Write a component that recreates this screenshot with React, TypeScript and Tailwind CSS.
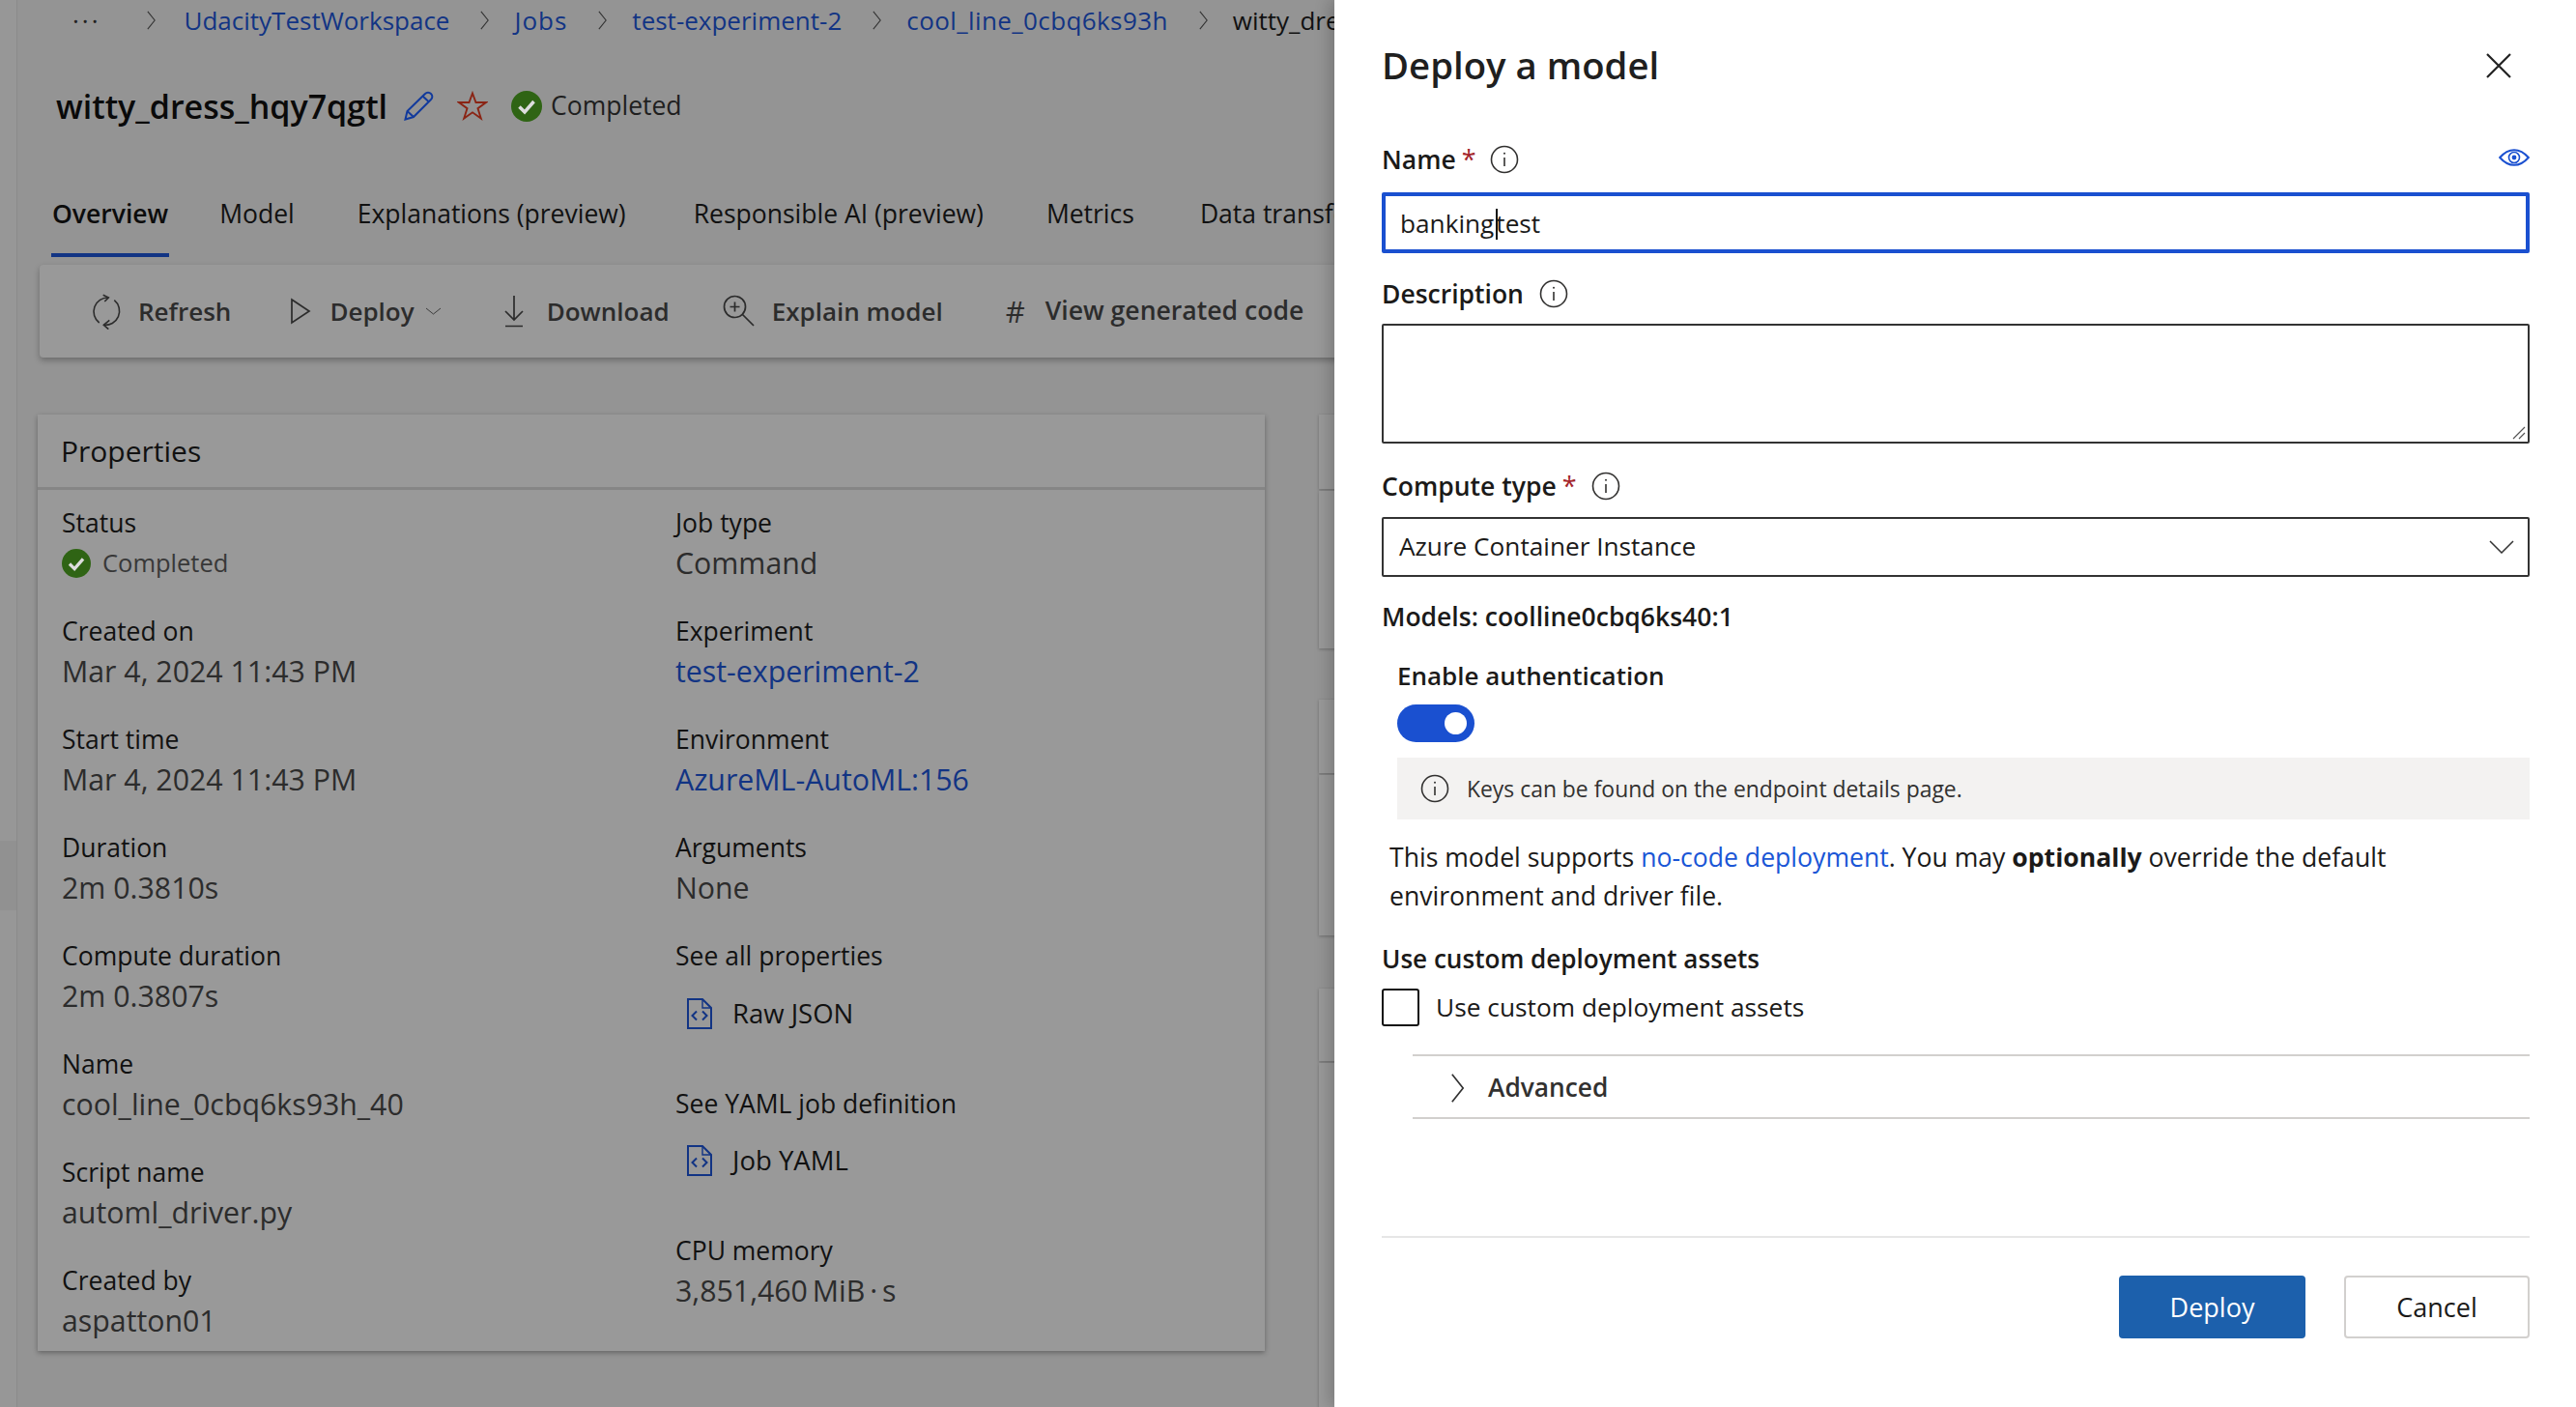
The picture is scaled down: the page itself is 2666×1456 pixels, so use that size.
import type { ReactNode } from "react";

const font = { fontFamily: '"Open Sans", "Liberation Sans", sans-serif' };

function Chevron({ className = "" }: { className?: string }) {
  return (
    <svg viewBox="0 0 12 24" className={`shrink-0 ${className}`} fill="none" stroke="currentColor" strokeWidth="1.2">
      <path d="M2 2l8 10-8 10" />
    </svg>
  );
}

function CheckCircle({ size }: { size: string }) {
  return (
    <svg viewBox="0 0 32 32" className={size}>
      <circle cx="16" cy="16" r="16" fill="#2f6414" />
      <path d="M8.500 16.500l5.500 5.500 9.500-11" fill="none" stroke="#dddddd" strokeWidth="3.500" />
    </svg>
  );
}

function InfoIcon({ className = "" }: { className?: string }) {
  return (
    <svg viewBox="0 0 30 30" className={`h-[30px] w-[30px] shrink-0 ${className}`} fill="none" stroke="#323130" strokeWidth="1.6">
      <circle cx="15" cy="15" r="13.5" />
      <path d="M15 13v9" />
      <circle cx="15" cy="8.8" r="1" fill="#323130" stroke="none" />
    </svg>
  );
}

function FileCode() {
  return (
    <svg viewBox="0 0 28 32" className="h-[32px] w-[28px] text-[#123484]" fill="none" stroke="currentColor" strokeWidth="2">
      <path d="M2 1h15l9 9v21H2z" />
      <path d="M17 1v9h9" strokeWidth="1.4" />
      <path d="M11 13.500L6.500 18l4.500 4.500M17 13.500l4.500 4.500-4.500 4.500" />
    </svg>
  );
}

function Crumb({ children, link = true, className }: { children: ReactNode; link?: boolean; className: string }) {
  return <span className={`${className} whitespace-nowrap ${link ? "text-[#123484]" : "text-[#111111]"}`}>{children}</span>;
}

function Prop({ label, children, link, gap = "mb-[30px]" }: { label: string; children: ReactNode; link?: boolean; gap?: string }) {
  return (
    <div className={gap}>
      <div className="h-[41px] text-[26.5px] leading-[41px] text-[#111111]">{label}</div>
      <div className={`h-[41px] whitespace-nowrap text-[30.3px] leading-[41px] ${link ? "text-[#123484]" : "text-[#2c2c2c]"}`}>{children}</div>
    </div>
  );
}

function ToolItem({ icon, label, ml, textMl }: { icon: ReactNode; label: string; ml: string; textMl: string }) {
  return (
    <div className={`flex items-center ${ml}`}>
      {icon}
      <span className={`${textMl} whitespace-nowrap text-[26px] font-semibold text-[#2c2c2c]`}>{label}</span>
    </div>
  );
}

function Tab({ label, ml, active }: { label: string; ml: string; active?: boolean }) {
  return (
    <span className={`${ml} whitespace-nowrap text-[26.5px] ${active ? "font-semibold text-[#0c0c0c]" : "text-[#111111]"}`}>{label}</span>
  );
}

function FieldLabel({ label, required, iconMl }: { label: string; required?: boolean; iconMl: string }) {
  return (
    <div className="flex h-[40px] items-center">
      <span className="pt-[2px] text-[26.5px] font-semibold text-[#1b1a19]">{label}</span>
      {required && <span className="ml-[6px] text-[27px] text-[#a4262c]">*</span>}
      <InfoIcon className={iconMl} />
    </div>
  );
}

export default function App() {
  return (
    <div style={font} className="flex h-[1456px] w-[2666px] overflow-hidden bg-[#949494]">
      <div className="w-[18px] shrink-0 border-r border-[#8a8a8a] bg-[#979797] pt-[870px]">
        <div className="h-[72px] bg-[#919191]" />
      </div>

      <div className="relative w-[1363px] shrink-0 overflow-hidden">
        {/* breadcrumb */}
        <div className="flex h-[42px] items-center text-[26px] whitespace-nowrap">
          <span className="ml-[57px] tracking-[3px] text-[#222222]">···</span>
          <Chevron className="ml-[46px] h-[22px] w-[11px] text-[#333333]" />
          <Crumb className="ml-[29px]">UdacityTestWorkspace</Crumb>
          <Chevron className="ml-[31px] h-[22px] w-[11px] text-[#333333]" />
          <Crumb className="ml-[25px] tracking-[1px]">Jobs</Crumb>
          <Chevron className="ml-[31px] h-[22px] w-[11px] text-[#333333]" />
          <Crumb className="ml-[25px]">test-experiment-2</Crumb>
          <Chevron className="ml-[31px] h-[22px] w-[11px] text-[#333333]" />
          <Crumb className="ml-[25px] tracking-[0.4px]">cool_line_0cbq6ks93h</Crumb>
          <Chevron className="ml-[31px] h-[22px] w-[11px] text-[#333333]" />
          <Crumb className="ml-[25px]" link={false}>witty_dress_hqy7qgtl</Crumb>
        </div>

        {/* title */}
        <div className="mt-[44px] flex h-[48px] items-center">
          <span className="ml-[40px] text-[34px] font-semibold text-[#0a0a0a]">witty_dress_hqy7qgtl</span>
          <svg viewBox="0 0 32 32" className="ml-[17px] h-[32px] w-[32px] text-[#123a9c]" fill="none" stroke="currentColor" strokeWidth="2">
            <path d="M1.500 29.500l2-8.500L22 3a4 4 0 0 1 6 0 4 4 0 0 1 0 6L10 27z" />
            <path d="M3.500 21L10 27M19.500 5.500l6.500 6" />
          </svg>
          <svg viewBox="0 0 32 32" className="ml-[23px] h-[32px] w-[32px] text-[#8a2414]" fill="none" stroke="currentColor" strokeWidth="1.9">
            <path d="M16 2.500l3.500 9.500H30l-8.500 6.200 3.300 10.300L16 22.300l-8.800 6.200 3.300-10.300L2 12h10.500z" />
          </svg>
          <span className="ml-[24px]"><CheckCircle size="h-[32px] w-[32px]" /></span>
          <span className="ml-[9px] text-[26.5px] text-[#1f1f1f]">Completed</span>
        </div>

        {/* tabs */}
        <div className="mt-[68px] flex h-[40px] items-center">
          <Tab label="Overview" ml="ml-[36px]" active />
          <Tab label="Model" ml="ml-[53px]" />
          <Tab label="Explanations (preview)" ml="ml-[65px]" />
          <Tab label="Responsible AI (preview)" ml="ml-[70px]" />
          <Tab label="Metrics" ml="ml-[65px]" />
          <Tab label="Data transfer" ml="ml-[68px]" />
        </div>
        <div className="ml-[35px] mt-[20px] h-[4px] w-[122px] bg-[#123484]" />

        {/* toolbar */}
        <div className="ml-[23px] mt-[8px] flex h-[96px] w-[1400px] items-center rounded-[4px] bg-[#999999] shadow-[0_3px_6px_rgba(0,0,0,0.28)]">
          <ToolItem
            ml="ml-[52px]"
            textMl="ml-[16px]"
            label="Refresh"
            icon={
              <svg viewBox="0 0 34 38" className="h-[38px] w-[34px] text-[#2c2c2c]" fill="none" stroke="currentColor" strokeWidth="1.600">
                <path d="M19.300 5A14.500 14.500 0 0 0 9.700 31M14.300 33.300A14.500 14.500 0 0 0 25.300 7.700" />
                <path d="M13.700 2.300L19.300 5l-4 4M19.300 37.700l-5-4.400 6-5" />
              </svg>
            }
          />
          <ToolItem
            ml="ml-[60px]"
            textMl="ml-[18px]"
            label="Deploy"
            icon={
              <svg viewBox="0 0 24 28" className="h-[28px] w-[24px] text-[#2c2c2c]" fill="none" stroke="currentColor" strokeWidth="1.7">
                <path d="M3 2l18 12L3 26z" />
              </svg>
            }
          />
          <Chevron className="ml-[15px] h-[18px] w-[9px] rotate-90 text-[#333333]" />
          <ToolItem
            ml="ml-[67px]"
            textMl="ml-[22px]"
            label="Download"
            icon={
              <svg viewBox="0 0 24 34" className="h-[34px] w-[24px] text-[#2c2c2c]" fill="none" stroke="currentColor" strokeWidth="1.7">
                <path d="M12 1v25M3 17l9 9 9-9M3 32.500h18" />
              </svg>
            }
          />
          <ToolItem
            ml="ml-[55px]"
            textMl="ml-[17px]"
            label="Explain model"
            icon={
              <svg viewBox="0 0 34 34" className="h-[34px] w-[34px] text-[#2c2c2c]" fill="none" stroke="currentColor" strokeWidth="1.7">
                <circle cx="12.500" cy="12.500" r="11" />
                <path d="M20.500 20.500L32 32M12.500 7.500v10M7.500 12.500h10" />
              </svg>
            }
          />
          <span className="ml-[65px] text-[31px] text-[#2c2c2c]">#</span>
          <span className="ml-[21px] whitespace-nowrap text-[26.6px] font-semibold text-[#2c2c2c]">View generated code</span>
        </div>

        {/* properties + stub column */}
        <div className="ml-[21px] mt-[59px] flex items-start">
          <section className="h-[969px] w-[1270px] shrink-0 bg-[#999999] shadow-[0_2px_5px_rgba(0,0,0,0.32)]">
            <div className="flex h-[78px] items-center border-b-[3px] border-[#858585] pl-[24px] text-[30px] text-[#111111]">Properties</div>
            <div className="grid grid-cols-[635px_1fr] pl-[25px] pt-[14px]">
              <div>
                <div className="mb-[30px]">
                  <div className="h-[41px] text-[26.5px] leading-[41px] text-[#111111]">Status</div>
                  <div className="flex h-[41px] items-center text-[25.5px] text-[#383838]">
                    <CheckCircle size="h-[30px] w-[30px]" />
                    <span className="ml-[12px]">Completed</span>
                  </div>
                </div>
                <Prop label="Created on">Mar 4, 2024 11:43 PM</Prop>
                <Prop label="Start time">Mar 4, 2024 11:43 PM</Prop>
                <Prop label="Duration">2m 0.3810s</Prop>
                <Prop label="Compute duration">2m 0.3807s</Prop>
                <Prop label="Name">cool_line_0cbq6ks93h_40</Prop>
                <Prop label="Script name">automl_driver.py</Prop>
                <Prop label="Created by" gap="">aspatton01</Prop>
              </div>
              <div>
                <Prop label="Job type">Command</Prop>
                <Prop label="Experiment" link>test-experiment-2</Prop>
                <Prop label="Environment" link>AzureML-AutoML:156</Prop>
                <Prop label="Arguments">None</Prop>
                <div className="h-[41px] text-[26.5px] leading-[41px] text-[#111111]">See all properties</div>
                <div className="ml-[11px] mt-[18px] flex h-[41px] items-center text-[27.5px] text-[#111111]">
                  <FileCode />
                  <span className="ml-[20px]">Raw JSON</span>
                </div>
                <div className="mt-[53px] h-[41px] text-[26.5px] leading-[41px] text-[#111111]">See YAML job definition</div>
                <div className="ml-[11px] mt-[17px] flex h-[41px] items-center text-[27.5px] text-[#111111]">
                  <FileCode />
                  <span className="ml-[20px]">Job YAML</span>
                </div>
                <div className="mt-[53px]">
                  <Prop label="CPU memory" gap=""><span className="[word-spacing:-3px]">3,851,460 MiB · s</span></Prop>
                </div>
              </div>
            </div>
          </section>
          <div className="ml-[56px] flex flex-col">
            <div className="h-[77px] w-[40px] bg-[#999999] shadow-[0_1px_3px_rgba(0,0,0,0.25)]" />
            <div className="mt-[2px] h-[163px] w-[40px] bg-[#999999] shadow-[0_1px_3px_rgba(0,0,0,0.25)]" />
            <div className="mt-[53px] h-[76px] w-[40px] bg-[#999999] shadow-[0_1px_3px_rgba(0,0,0,0.25)]" />
            <div className="mt-[2px] h-[166px] w-[40px] bg-[#999999] shadow-[0_1px_3px_rgba(0,0,0,0.25)]" />
            <div className="mt-[55px] h-[75px] w-[40px] bg-[#999999] shadow-[0_1px_3px_rgba(0,0,0,0.25)]" />
            <div className="mt-[2px] h-[360px] w-[40px] bg-[#999999] shadow-[0_1px_3px_rgba(0,0,0,0.25)]" />
          </div>
        </div>
        <div className="ml-[21px] mt-[55px] h-[20px] w-[1270px] bg-[#999999]" />
      </div>

      {/* deploy panel */}
      <aside className="relative z-10 flex w-[1285px] shrink-0 flex-col bg-white pl-[49px] pr-[48px] pt-[40px] shadow-[-6px_0_14px_rgba(0,0,0,0.18)]">
        <div className="flex h-[56px] items-center justify-between">
          <h1 className="text-[38.3px] font-semibold text-[#1f1f1f]">Deploy a model</h1>
          <svg viewBox="0 0 26 26" className="mr-[19px] h-[26px] w-[26px] text-[#222222]" fill="none" stroke="currentColor" strokeWidth="2.200">
            <path d="M1 1l24 24M25 1L1 25" />
          </svg>
        </div>

        <div className="mt-[49px] flex items-center justify-between">
          <FieldLabel label="Name" required iconMl="ml-[14px]" />
          <svg viewBox="0 0 32 18" className="mb-[4px] h-[18px] w-[32px] text-[#1a50d0]" fill="none" stroke="currentColor" strokeWidth="2">
            <path d="M1.200 9C6 3.500 11 1.200 16 1.200S26 3.500 30.800 9C26 14.500 21 16.800 16 16.800S6 14.500 1.200 9z" />
            <circle cx="16" cy="9" r="5.500" strokeWidth="1.600" />
            <circle cx="16" cy="9" r="2.400" fill="currentColor" stroke="none" />
          </svg>
        </div>
        <div className="mt-[14px] flex h-[63px] items-center rounded-[2px] border-[4px] border-[#1a50d0] pl-[15px] pt-[2px] text-[26.2px] text-[#1b1a19]">
          <span>banking</span>
          <span className="ml-[2px] mr-[-2px] h-[32px] w-[2px] bg-[#111111]" />
          <span>test</span>
        </div>

        <div className="mt-[22px]"><FieldLabel label="Description" iconMl="ml-[16px]" /></div>
        <div className="relative mt-[11px] h-[124px] rounded-[2px] border-2 border-[#333333]">
          <svg viewBox="0 0 14 14" className="absolute bottom-[2px] right-[2px] h-[14px] w-[14px]" fill="none" stroke="#555555" strokeWidth="1.200">
            <path d="M1 13L13 1M7 13l6-6" />
          </svg>
        </div>

        <div className="mt-[24px]"><FieldLabel label="Compute type" required iconMl="ml-[15px]" /></div>
        <div className="mt-[12px] flex h-[62px] items-center justify-between rounded-[2px] border-2 border-[#333333] pl-[16px] pr-[14px] text-[26.2px] text-[#1b1a19]">
          <span>Azure Container Instance</span>
          <svg viewBox="0 0 26 14" className="h-[14px] w-[26px] text-[#333333]" fill="none" stroke="currentColor" strokeWidth="1.500">
            <path d="M1 1l12 12L25 1" />
          </svg>
        </div>

        <div className="mt-[22px] flex h-[40px] items-center text-[26.5px] font-semibold text-[#1b1a19]">Models: coolline0cbq6ks40:1</div>

        <div className="ml-[16px] mt-[20px] flex h-[40px] items-center text-[26px] font-semibold text-[#1b1a19]">Enable authentication</div>
        <div className="ml-[16px] mt-[10px] flex h-[39px] w-[80px] items-center justify-end rounded-full bg-[#1a50d0] pr-[8px]">
          <div className="h-[23px] w-[23px] rounded-full bg-white" />
        </div>

        <div className="ml-[16px] mt-[16px] flex h-[64px] items-center bg-[#f3f2f1] pl-[24px]">
          <InfoIcon />
          <span className="ml-[18px] pt-[2px] text-[22.9px] text-[#323130]">Keys can be found on the endpoint details page.</span>
        </div>

        <p className="ml-[8px] mt-[19px] text-[26.6px] leading-[40px] text-[#1b1a19]">
          This model supports <span className="text-[#1a56d6]">no-code deployment</span>. You may <span className="font-bold">optionally</span> override the default
          <br />
          environment and driver file.
        </p>

        <div className="mt-[26px] flex h-[40px] items-center text-[26.1px] font-semibold text-[#1b1a19]">Use custom deployment assets</div>
        <div className="mt-[10px] flex h-[39px] items-center">
          <div className="h-[39px] w-[39px] rounded-[3px] border-2 border-[#111111]" />
          <span className="ml-[17px] text-[26.3px] text-[#1b1a19]">Use custom deployment assets</span>
        </div>

        <div className="ml-[32px] mt-[29px] flex h-[67px] items-center border-y-2 border-[#d2d0ce] pt-[2px]">
          <Chevron className="ml-[38px] h-[34px] w-[17px] text-[#333333]" />
          <span className="ml-[23px] text-[26.3px] font-semibold text-[#323130]">Advanced</span>
        </div>

        <div className="mt-[121px] h-[2px] bg-[#e6e6e6]" />
        <div className="mt-[39px] flex justify-end gap-[40px]">
          <button type="button" className="h-[65px] w-[193px] rounded-[4px] bg-[#1c60ac] pt-[2px] text-[27px] font-medium text-white">Deploy</button>
          <button type="button" className="h-[65px] w-[192px] rounded-[4px] border-2 border-[#d2d0ce] bg-white pt-[2px] text-[27px] font-medium text-[#1b1a19]">Cancel</button>
        </div>
      </aside>
    </div>
  );
}
